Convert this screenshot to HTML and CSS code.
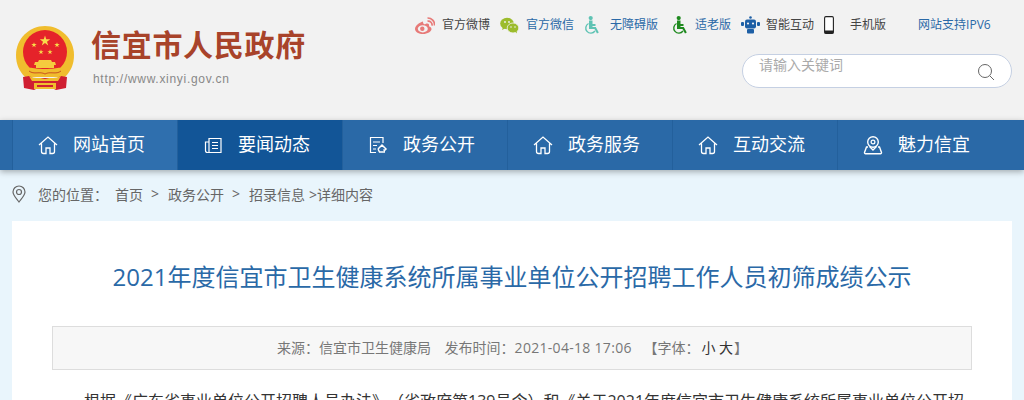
FILE: index.html
```html
<!DOCTYPE html>
<html lang="zh-CN">
<head>
<meta charset="utf-8">
<title>信宜市人民政府</title>
<link rel="stylesheet" href="styles.css">
</head>
<body>
<header class="top">
  <div class="brand">
    <svg class="emblem" width="60" height="66" viewBox="0 0 60 66">
      <defs><polygon id="s" points="0,-5.500 1.230,-1.700 5.230,-1.700 2,.650 3.230,4.450 0,2.100 -3.230,4.450 -2,.650 -5.230,-1.700 -1.230,-1.700"/></defs>
      <path d="M30 1C14 1 1 14 1 30c0 9 3 16 9 22h40c6-6 9-13 9-22C59 14 46 1 30 1z" fill="#f0bd2e"/>
      <circle cx="30" cy="27" r="22" fill="#e5232a"/>
      <g fill="#f8dc4a">
        <use href="#s" transform="translate(30,16)"/>
        <use href="#s" transform="translate(19,20) scale(.52)"/>
        <use href="#s" transform="translate(42,20) scale(.52)"/>
        <use href="#s" transform="translate(26,27) scale(.5)"/>
        <use href="#s" transform="translate(35,27) scale(.5)"/>
      </g>
      <path d="M24 35h12l1 2h3l1 3H19l1-3h3zM21 40h18v3H21z" fill="#f5cb3e"/>
      <path d="M11 43c6-1 10 1 19 1s13-2 19-1l-3 9H14z" fill="#f0bd2e"/>
      <path d="M14 46c5 4 11 0 16 3 5-3 11 1 16-3" fill="none" stroke="#c9541f" stroke-width="1"/>
      <path d="M8 52l6-1 4 2 24 0 4-2 6 1-1 11-10 2-4-2H23l-4 2-10-2z" fill="#d01f32"/>
      <path d="M14 51c5 3 10 1 16 3 6-2 11 0 16-3l-3 5H17z" fill="#f0bd2e"/>
      <path d="M19 58h22v6H19z" fill="#f0bd2e"/>
      <path d="M22 60h16v2H22z" fill="#d01f32"/>
    </svg>
    <div class="brand-text">
      <div class="brand-name">信宜市人民政府</div>
      <div class="brand-url">http://www.xinyi.gov.cn</div>
    </div>
  </div>
  <div class="tools">
    <ul class="links">
      <li class="link l-weibo">
        <svg width="20" height="17" viewBox="0 0 20 17"><path d="M8 4.500C4 5.500 0 9 0 12c0 3 4 5 8 5 4.500 0 8.500-2.500 8.500-5 0-1.500-1.500-2.300-2.500-2.700.5-1.800-.5-3.500-3.500-2.300-1.500.6-2.500 0-2.500-2.500z" fill="#e77a78"/><ellipse cx="7.800" cy="11.800" rx="5" ry="3.600" fill="#f2f2f2"/><circle cx="7.300" cy="11.800" r="2.200" fill="#e77a78"/><path d="M12.500 4.200a3.800 3.800 0 0 1 4.500 4.500M12.500 1a6.800 6.800 0 0 1 7 7.500" fill="none" stroke="#e77a78" stroke-width="1.700"/></svg>
        <span>官方微博</span>
      </li>
      <li class="link l-wechat accent">
        <svg width="19" height="17" viewBox="0 0 19 17"><ellipse cx="7" cy="6.500" rx="6.800" ry="5.800" fill="#9cbc2c"/><ellipse cx="13" cy="11" rx="5.800" ry="5" fill="#9cbc2c" stroke="#f2f2f2" stroke-width=".8"/><path d="M3 10l-1 3 3-1.500zM15 14.500l2 2-.5-3z" fill="#9cbc2c"/><circle cx="5" cy="5" r=".9" fill="#f2f2f2"/><circle cx="9" cy="5" r=".9" fill="#f2f2f2"/><circle cx="11" cy="10" r=".8" fill="#f2f2f2"/><circle cx="15" cy="10" r=".8" fill="#f2f2f2"/></svg>
        <span>官方微信</span>
      </li>
      <li class="link l-access accent">
        <svg width="16" height="18" viewBox="0 0 16 18"><path d="M5 4.500h3.500v3.500h3v2h-3v1h3.300l3 5.500-1.800 1-2.500-4.500H5z" fill="#5fc3b4"/><path d="M4.500 7.500a5.100 5.100 0 1 0 6.500 7.500" fill="none" stroke="#5fc3b4" stroke-width="1.400"/><circle cx="6.700" cy="2.100" r="2.100" fill="#5fc3b4"/></svg>
        <span>无障碍版</span>
      </li>
      <li class="link l-elder accent">
        <svg width="16" height="18" viewBox="0 0 16 18"><path d="M5 4.500h3.500v3.500h3v2h-3v1h3.300l3 5.500-1.800 1-2.500-4.500H5z" fill="#1f8a1f"/><path d="M4.500 7.500a5.100 5.100 0 1 0 6.500 7.500" fill="none" stroke="#1f8a1f" stroke-width="1.400"/><circle cx="6.700" cy="2.100" r="2.100" fill="#1f8a1f"/></svg>
        <span>适老版</span>
      </li>
      <li class="link l-robot">
        <svg width="19" height="18" viewBox="0 0 19 18"><circle cx="9.500" cy="1.500" r="1.300" fill="#1d5fa5"/><rect x="4" y="3.500" width="11" height="9" rx="2" fill="#1d5fa5"/><rect x="0" y="6" width="3" height="4" rx="1" fill="#1d5fa5"/><rect x="16" y="6" width="3" height="4" rx="1" fill="#1d5fa5"/><rect x="6" y="13" width="7" height="4.500" rx="1" fill="#1d5fa5"/><circle cx="7" cy="7.500" r="1.100" fill="#f2f2f2"/><circle cx="12" cy="7.500" r="1.100" fill="#f2f2f2"/></svg>
        <span>智能互动</span>
      </li>
      <li class="link l-phone">
        <svg width="10" height="18" viewBox="0 0 10 18"><rect x=".6" y=".6" width="8.800" height="16.800" rx="1.300" fill="#fff" stroke="#222" stroke-width="1.100"/><rect x=".6" y="14.500" width="8.800" height="2.900" fill="#222"/></svg>
        <span>手机版</span>
      </li>
      <li class="link l-ipv6 accent"><span>网站支持IPV6</span></li>
    </ul>
    <div class="search">
      <span class="placeholder">请输入关键词</span>
      <svg width="18" height="18" viewBox="0 0 18 18"><circle cx="8" cy="8" r="6.500" fill="none" stroke="#666" stroke-width="1"/><path d="M12.800 12.800L17 17" stroke="#666" stroke-width="1"/></svg>
    </div>
  </div>
</header>

<nav class="nav">
  <ul class="nav-list">
    <li class="nav-item first">
      <svg width="20" height="20" viewBox="0 0 20 20"><path d="M1 10l9-8 9 8M3.500 8.500V16.500a2 2 0 0 0 2 2H8V13h4v5.500h2.500a2 2 0 0 0 2-2V8.500" fill="none" stroke="#fff" stroke-width="1.300"/></svg>
      <span>网站首页</span>
    </li>
    <li class="nav-item active">
      <svg width="20" height="20" viewBox="0 0 20 20"><path d="M6 3.500h12v14H6zM6 7H2.500v8.500a2 2 0 0 0 2 2H6M9 7.500h6M9 10.500h6M9 13.500h6" fill="none" stroke="#fff" stroke-width="1.200"/></svg>
      <span>要闻动态</span>
    </li>
    <li class="nav-item">
      <svg width="20" height="20" viewBox="0 0 20 20"><path d="M15 8V2.500H2.500v15H8M5 7h7M5 10.500h4M5 14h3" fill="none" stroke="#fff" stroke-width="1.200"/><path d="M10 14l4-4 4 4-1.500 1.500-1-1M10 14l1.500 3h5.500" fill="none" stroke="#fff" stroke-width="1.500"/></svg>
      <span>政务公开</span>
    </li>
    <li class="nav-item">
      <svg width="20" height="20" viewBox="0 0 20 20"><path d="M1 10l9-8 9 8M3.500 8.500V16.500a2 2 0 0 0 2 2H8V13h4v5.500h2.500a2 2 0 0 0 2-2V8.500" fill="none" stroke="#fff" stroke-width="1.300"/></svg>
      <span>政务服务</span>
    </li>
    <li class="nav-item">
      <svg width="20" height="20" viewBox="0 0 20 20"><path d="M1 10l9-8 9 8M3.500 8.500V16.500a2 2 0 0 0 2 2H8V13h4v5.500h2.500a2 2 0 0 0 2-2V8.500" fill="none" stroke="#fff" stroke-width="1.300"/></svg>
      <span>互动交流</span>
    </li>
    <li class="nav-item">
      <svg width="20" height="20" viewBox="0 0 20 20"><circle cx="10" cy="7" r="5.300" fill="none" stroke="#fff" stroke-width="1.400"/><circle cx="10" cy="7" r="1.900" fill="none" stroke="#fff" stroke-width="1.200"/><path d="M6.500 11.500L10 15l3.500-3.500M5 12H3.500L1.500 17.500a1 1 0 0 0 1 1.200h15a1 1 0 0 0 1-1.200L16.500 12H15" fill="none" stroke="#fff" stroke-width="1.400"/></svg>
      <span>魅力信宜</span>
    </li>
  </ul>
</nav>

<div class="crumbs">
  <svg width="14" height="18" viewBox="0 0 14 18"><path d="M7 17C4 13 1 10 1 7a6 6 0 0 1 12 0c0 3-3 6-6 10z" fill="none" stroke="#666" stroke-width="1.200"/><circle cx="7" cy="7" r="2.500" fill="none" stroke="#666" stroke-width="1.200"/></svg>
  <span class="crumb-label">您的位置：</span>
  <span>首页</span><span class="sep">&gt;</span><span>政务公开</span><span class="sep">&gt;</span><span>招录信息</span><span class="sep-last">&gt;详细内容</span>
</div>

<main class="card">
  <h1 class="title">2021年度信宜市卫生健康系统所属事业单位公开招聘工作人员初筛成绩公示</h1>
  <div class="meta">
    <span>来源：信宜市卫生健康局</span>
    <span>发布时间：<span class="date">2021-04-18 17:06</span></span>
    <span>【字体：<b class="size">小 大</b>】</span>
  </div>
  <p class="body-text">根据《广东省事业单位公开招聘人员办法》（省政府第139号令）和《关于2021年度信宜市卫生健康系统所属事业单位公开招</p>
</main>
</body>
</html>
```
FILE: styles.css
```css
* { box-sizing: border-box; }
html, body { margin: 0; padding: 0; height: 400px; overflow: hidden; }
body {
  background: #e9f5fc;
  font-family: "Open Sans", "Noto Sans CJK SC", sans-serif;
  color: #666;
  text-spacing-trim: space-all;
}
ul { list-style: none; margin: 0; padding: 0; }

.top {
  height: 120px;
  background: #f2f2f2;
  padding: 0 12px 0 15px;
  display: flex;
  justify-content: space-between;
}
.brand { display: flex; padding-top: 25px; }
.emblem { margin-right: 16px; }
.brand-name {
  font-size: 30px;
  line-height: 40px;
  font-weight: 700;
  color: #a8432a;
  letter-spacing: .7px;
  white-space: nowrap;
}
.brand-url {
  font-family: "Liberation Sans", sans-serif;
  font-size: 12px;
  line-height: 14px;
  letter-spacing: .7px;
  color: #888;
  margin-top: 7px;
  margin-left: 2px;
}

.tools { width: 597px; display: flex; flex-direction: column; align-items: flex-end; padding-top: 15px; }
.links { display: flex; width: 100%; font-size: 12px; line-height: 20px; color: #444; }
.link { display: flex; align-items: center; white-space: nowrap; }
.accent { color: #2a69a7; }
.l-weibo svg { margin-right: 7px; }
.l-wechat { margin-left: 10px; }
.l-wechat svg { margin-right: 7px; }
.l-access { margin-left: 10px; }
.l-access svg { margin-right: 10px; }
.l-elder { margin-left: 14px; }
.l-elder svg { margin-right: 7px; }
.l-robot { margin-left: 10px; }
.l-robot svg { margin-right: 6px; }
.l-phone { margin-left: 10px; }
.l-phone svg { margin-right: 16px; }
.l-ipv6 { margin-left: 32px; }

.search {
  width: 270px;
  height: 34px;
  margin-top: 19px;
  border: 1px solid #c5d0e3;
  border-radius: 17px;
  background: #fff;
  padding: 0 16px;
  display: flex;
  justify-content: space-between;
}
.placeholder { font-size: 14px; line-height: 20px; color: #aaa; }
.search svg { margin-top: 8px; }

.nav { height: 50px; background: #2a69a7; box-shadow: 0 2px 6px rgba(0,0,0,.3); position: relative; }
.nav-list { display: flex; margin-left: 12px; width: 1000px; height: 50px; }
.nav-item {
  width: 165px;
  display: flex;
  align-items: center;
  padding-left: 25px;
  border-left: 1px solid #23609c;
  color: #fff;
  font-size: 18px;
}
.nav-item svg { margin-right: 15px; flex: none; }
.nav-item span { margin-bottom: 4px; }
.nav-item.first { background: #2f6fae; }
.nav-item.active { background: #125597; }

.crumbs {
  height: 51px;
  padding: 0 0 4px 12px;
  display: flex;
  align-items: center;
  font-size: 14px;
  color: #666;
}
.crumbs svg { margin-right: 12px; }
.crumb-label { margin-right: 7px; }
.sep { margin: 0 9px 0 8px; }
.sep-last { margin-left: 4px; }

.card { margin: 0 12px; background: #fff; height: 179px; padding: 0 40px; overflow: hidden; }
.title {
  margin: 0;
  padding-top: 38px;
  font-size: 24px;
  line-height: 36px;
  font-weight: 400;
  color: #2a69a7;
  text-align: center;
}
.meta {
  margin-top: 31px;
  height: 44px;
  border: 1px solid #ddd;
  background: #f7f7f7;
  padding-left: 1px;
  font-size: 14px;
  line-height: 42px;
  text-align: center;
  color: #777;
}
.meta > span + span { margin-left: 10px; }
.meta > span:last-child { margin-left: 8px; }
.date { letter-spacing: .3px; }
.size { font-weight: 400; color: #333; margin-left: 2px; margin-right: 1px; }
.body-text {
  margin: 16px 0 0;
  font-size: 16px;
  line-height: 30px;
  text-indent: 32px;
  color: #333;
  white-space: nowrap;
}
```
